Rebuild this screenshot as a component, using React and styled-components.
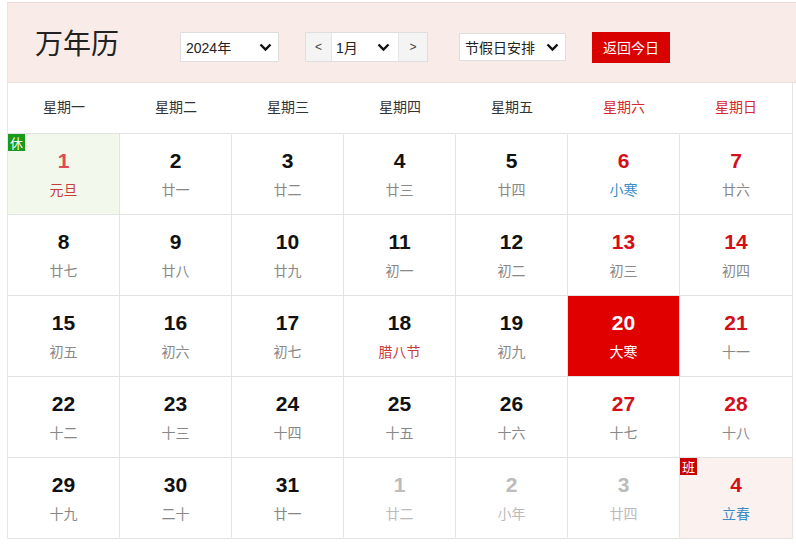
import React from "react";
import styled, { createGlobalStyle } from "styled-components";

const Global = createGlobalStyle`
  html, body { margin: 0; padding: 0; background: #fff; overflow: hidden; }
  body { font-family: "Liberation Sans", "Noto Sans CJK SC", sans-serif; }
`;

const Page = styled.div`
  padding: 2px 0 0 7px;
  width: 820px;
`;

const Box = styled.div`
  border-top: 1px solid #ecdcd8;
  border-left: 1px solid #e6e6e6;
  width: 805px;
`;

const Header = styled.div`
  height: 80px;
  box-sizing: border-box;
  background: #f9ece8;
  border-bottom: 1px solid #eadcd8;
  display: flex;
  align-items: center;
  padding: 9px 0 0 27px;
`;

const Title = styled.h1`
  margin: 0 61px 0 0;
  font-family: "Noto Sans CJK SC", sans-serif;
  font-weight: 400;
  font-size: 28px;
  color: #222;
  line-height: 1;
  position: relative;
  top: -5px;
`;

const Select = styled.div`
  display: flex;
  align-items: center;
  justify-content: space-between;
  box-sizing: border-box;
  width: ${(p) => p.$w}px;
  height: ${(p) => p.$h || 30}px;
  padding: 0 6px 0 5px;
  background: #fff;
  border: 1px solid #dedede;
  font-size: 14px;
  color: #222;
  font-family: "Liberation Sans", "Noto Sans CJK SC", sans-serif;
  margin-right: ${(p) => p.$mr || 0}px;
  gap: 4px;
`;

const Group = styled.div`
  display: flex;
  height: 30px;
  box-sizing: border-box;
  border: 1px solid #dedede;
  margin-right: 31px;
`;

const Arrow = styled.div`
  width: ${(p) => p.$w}px;
  background: #f4f4f4;
  display: flex;
  align-items: center;
  justify-content: center;
  font-size: 12px;
  color: #444;
  font-family: "Liberation Sans", sans-serif;
`;

const MonthSel = styled.div`
  width: 68px;
  background: #fff;
  border-left: 1px solid #e6e6e6;
  border-right: 1px solid #e6e6e6;
  display: flex;
  align-items: center;
  justify-content: space-between;
  padding: 0 8px 0 4px;
  box-sizing: border-box;
  font-size: 14px;
  color: #222;
`;

const TodayBtn = styled.button`
  width: 78px;
  height: 31px;
  border: none;
  background: #d90000;
  color: #fff;
  font-size: 14px;
  font-family: "Noto Sans CJK SC", sans-serif;
  padding: 0;
  margin-left: 26px;
`;

const Chevron = () => (
  <svg width="13" height="9" viewBox="0 0 13 9">
    <polyline points="1.5,1.5 6.5,6.5 11.5,1.5" fill="none" stroke="#111" strokeWidth="2.4" />
  </svg>
);

const Grid = styled.div`
  display: grid;
  grid-template-columns: repeat(7, 112px);
  width: 784px;
  border-right: 1px solid #e3e3e3;
`;

const WeekDay = styled.div`
  height: 51px;
  box-sizing: border-box;
  padding-bottom: 5px;
  display: flex;
  align-items: center;
  justify-content: center;
  font-size: 14px;
  font-family: "Noto Sans CJK SC", sans-serif;
  color: ${(p) => (p.$red ? "#d42a2a" : "#333")};
  border-bottom: 1px solid #e3e3e3;
`;

const Cell = styled.div`
  position: relative;
  height: 80px;
  box-sizing: content-box;
  border-bottom: 1px solid #e3e3e3;
  border-right: ${(p) => (p.$last ? "none" : "1px solid #e3e3e3")};
  background: ${(p) => p.$bg || "#fff"};
  display: flex;
  flex-direction: column;
  align-items: center;
  width: ${(p) => (p.$last ? 112 : 111)}px;
`;

const Num = styled.div`
  margin-top: 16px;
  font-family: "Liberation Sans", Arial, sans-serif;
  font-weight: 700;
  font-size: 21px;
  line-height: 22px;
  color: ${(p) => p.$c};
`;

const Lunar = styled.div`
  margin-top: 7px;
  font-family: "Noto Sans CJK SC", sans-serif;
  font-size: 14px;
  line-height: 20px;
  color: ${(p) => p.$c};
`;

const Badge = styled.span`
  position: absolute;
  top: 0;
  left: 0;
  width: 17px;
  height: 17px;
  background: ${(p) => p.$bg};
  color: #fff;
  font-size: 13px;
  line-height: 17px;
  text-align: center;
  font-family: "Noto Sans CJK SC", sans-serif;
`;

const RED = "#d40f1a";
const BLUE = "#3a8dc5";
const GREY = "#888";
const FEST = "#c93a3a";
const OTHER = "#bbb";

const days = [
  [1, "元旦", { num: "#e04a50", lunar: FEST, bg: "#f2f9ec", badge: ["休", "#1a9a1a"] }],
  [2, "廿一"], [3, "廿二"], [4, "廿三"], [5, "廿四"], [6, "小寒", { lunar: BLUE }], [7, "廿六"],
  [8, "廿七"], [9, "廿八"], [10, "廿九"], [11, "初一"], [12, "初二"], [13, "初三"], [14, "初四"],
  [15, "初五"], [16, "初六"], [17, "初七"], [18, "腊八节", { lunar: FEST }], [19, "初九"],
  [20, "大寒", { num: "#fff", lunar: "#fff", bg: "#e00000" }], [21, "十一"],
  [22, "十二"], [23, "十三"], [24, "十四"], [25, "十五"], [26, "十六"], [27, "十七"], [28, "十八"],
  [29, "十九"], [30, "二十"], [31, "廿一"],
  [1, "廿二", { num: OTHER, lunar: OTHER }], [2, "小年", { num: OTHER, lunar: OTHER }], [3, "廿四", { num: OTHER, lunar: OTHER }],
  [4, "立春", { num: RED, lunar: BLUE, bg: "#fbf1ee", badge: ["班", "#c80000"] }],
];

const weekdays = ["星期一", "星期二", "星期三", "星期四", "星期五", "星期六", "星期日"];

export default function App() {
  return (
    <Page>
      <Global />
      <Box>
        <Header>
          <Title>万年历</Title>
          <Select $w={99} $mr={26}>
            <span>2024年</span>
            <Chevron />
          </Select>
          <Group>
            <Arrow $w={25}>&lt;</Arrow>
            <MonthSel>
              <span>1月</span>
              <Chevron />
            </MonthSel>
            <Arrow $w={28}>&gt;</Arrow>
          </Group>
          <Select $w={107} $h={28}>
            <span style={{ fontFamily: '"Noto Sans CJK SC", sans-serif' }}>节假日安排</span>
            <Chevron />
          </Select>
          <TodayBtn>返回今日</TodayBtn>
        </Header>
        <Grid>
          {weekdays.map((w, i) => (
            <WeekDay key={w} $red={i >= 5}>{w}</WeekDay>
          ))}
          {days.map(([n, l, o = {}], i) => {
            const col = i % 7;
            const weekend = col >= 5;
            const numC = o.num || (weekend ? RED : "#111");
            const lunC = o.lunar || GREY;
            return (
              <Cell key={i} $bg={o.bg} $last={col === 6}>
                {o.badge && <Badge $bg={o.badge[1]}>{o.badge[0]}</Badge>}
                <Num $c={numC}>{n}</Num>
                <Lunar $c={lunC}>{l}</Lunar>
              </Cell>
            );
          })}
        </Grid>
      </Box>
    </Page>
  );
}
